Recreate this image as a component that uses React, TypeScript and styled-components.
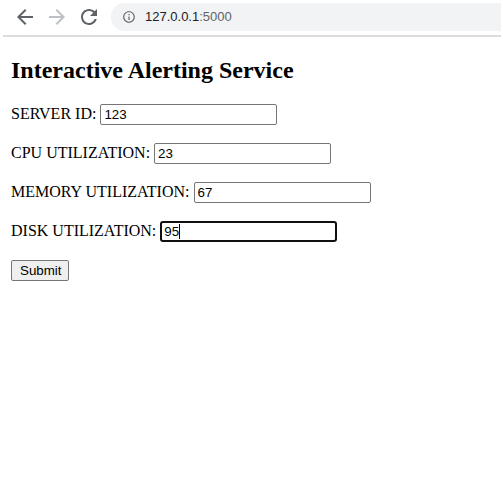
import styled, { createGlobalStyle } from "styled-components";

const GlobalStyle = createGlobalStyle`
	html, body {
		margin: 0;
		padding: 0;
		background: #fff;
	}
`;

const Window = styled.div`
	width: 503px;
	height: 502px;
	background: #fff;
	overflow: hidden;
`;

const Toolbar = styled.div`
	display: flex;
	align-items: center;
	box-sizing: border-box;
	height: 37px;
	margin: 0 2px 0 3px;
	padding: 0 0 2px 10px;
	border-bottom: 2px solid #dadce0;
`;

const NavButton = styled.div<{ disabled?: boolean }>`
	display: flex;
	align-items: center;
	justify-content: center;
	width: 24px;
	height: 24px;
	margin-right: 8px;
	color: ${(props) => (props.disabled ? "#bdc1c6" : "#5f6368")};
	svg {
		width: 24px;
		height: 24px;
		fill: currentColor;
	}
`;

const Omnibox = styled.div`
	flex: 1;
	display: flex;
	align-items: center;
	height: 28px;
	margin-left: 2px;
	padding-left: 11px;
	background: #f1f3f4;
	border-radius: 14px 0 0 14px;
	font-family: "Liberation Sans", Arial, sans-serif;
	font-size: 13px;
	svg {
		width: 14px;
		height: 14px;
		fill: #5f6368;
		margin-right: 9px;
	}
`;

const Host = styled.span`
	color: #202124;
`;

const Port = styled.span`
	color: #5f6368;
`;

const Page = styled.div`
	padding: 20px 8px 8px 11px;
	font-family: "Liberation Serif", "Times New Roman", serif;
	font-size: 16px;
	color: #000;
`;

const Title = styled.h2`
	margin: 0 0 20px;
	font-size: 24px;
	font-weight: bold;
`;

const Form = styled.form`
	display: flex;
	flex-direction: column;
	align-items: flex-start;
	gap: 16px;
`;

const Row = styled.label`
	display: flex;
	align-items: baseline;
	gap: 4px;
	height: 23px;
`;

const FieldWrap = styled.span`
	position: relative;
	display: inline-flex;
`;

const Field = styled.input<{ $focused?: boolean }>`
	box-sizing: border-box;
	width: 177px;
	height: 21px;
	padding: ${(props) => (props.$focused ? "0 2px" : "1px 3px")};
	border: ${(props) => (props.$focused ? "2px solid #101010" : "1px solid #767676")};
	border-radius: ${(props) => (props.$focused ? "3px" : "2px")};
	font-family: "Liberation Sans", Arial, sans-serif;
	font-size: 13.33px;
	color: #000;
	background: #fff;
	outline: none;
	caret-color: transparent;
`;

const Caret = styled.span`
	position: absolute;
	left: 19px;
	top: 3px;
	width: 1px;
	height: 15px;
	background: #000;
	pointer-events: none;
`;

const Submit = styled.button`
	box-sizing: border-box;
	height: 21px;
	padding: 1px 7px 1px 8px;
	border: 1px solid #767676;
	border-radius: 2px;
	background: #efefef;
	font-family: "Liberation Sans", Arial, sans-serif;
	font-size: 13.33px;
	color: #000;
`;

const fields = [
	{ label: "SERVER ID:", value: "123" },
	{ label: "CPU UTILIZATION:", value: "23" },
	{ label: "MEMORY UTILIZATION:", value: "67" },
	{ label: "DISK UTILIZATION:", value: "95", focused: true },
];

const App = () => {
	return (
		<Window>
			<GlobalStyle />
			<Toolbar>
				<NavButton>
					<svg viewBox="0 0 24 24">
						<path d="M20 11H7.83l5.59-5.59L12 4l-8 8 8 8 1.41-1.41L7.83 13H20v-2z" />
					</svg>
				</NavButton>
				<NavButton disabled>
					<svg viewBox="0 0 24 24">
						<path d="M12 4l-1.41 1.41L16.17 11H4v2h12.17l-5.58 5.59L12 20l8-8z" />
					</svg>
				</NavButton>
				<NavButton>
					<svg viewBox="0 0 24 24">
						<path d="M17.65 6.35C16.2 4.9 14.21 4 12 4c-4.42 0-7.99 3.58-7.99 8s3.57 8 7.99 8c3.73 0 6.84-2.55 7.73-6h-2.08c-.82 2.33-3.04 4-5.65 4-3.31 0-6-2.69-6-6s2.69-6 6-6c1.66 0 3.14.69 4.22 1.78L13 11h7V4l-2.35 2.35z" />
					</svg>
				</NavButton>
				<Omnibox>
					<svg viewBox="0 0 24 24">
						<path d="M11 7h2v2h-2zm0 4h2v6h-2zm1-9C6.48 2 2 6.48 2 12s4.48 10 10 10 10-4.48 10-10S17.52 2 12 2zm0 18c-4.41 0-8-3.59-8-8s3.59-8 8-8 8 3.59 8 8-3.59 8-8 8z" />
					</svg>
					<Host>127.0.0.1</Host>
					<Port>:5000</Port>
				</Omnibox>
			</Toolbar>
			<Page>
				<Title>Interactive Alerting Service</Title>
				<Form onSubmit={(e) => e.preventDefault()}>
					{fields.map((field) => (
						<Row key={field.label}>
							{field.label}
							<FieldWrap>
								<Field
									type="text"
									defaultValue={field.value}
									$focused={field.focused}
									autoFocus={field.focused}
								/>
								{field.focused && <Caret />}
							</FieldWrap>
						</Row>
					))}
					<Submit type="submit">Submit</Submit>
				</Form>
			</Page>
		</Window>
	);
};

export default App;
